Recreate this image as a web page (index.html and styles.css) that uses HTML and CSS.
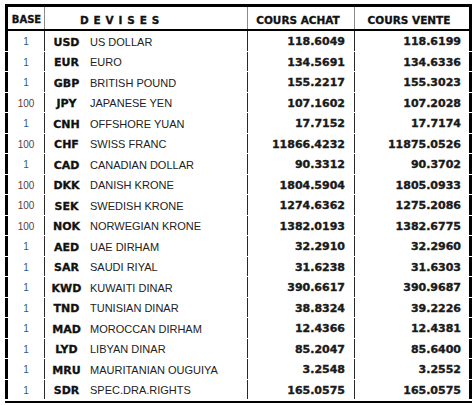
FILE: index.html
```html
<!DOCTYPE html>
<html>
<head>
<meta charset="utf-8">
<link rel="stylesheet" href="styles.css">
</head>
<body>
<div class="table">
  <div class="head">
    <div class="c-base">BASE</div>
    <div class="c-dev">D E V I S E S</div>
    <div class="c-num">COURS ACHAT</div>
    <div class="c-num">COURS VENTE</div>
  </div>
  <div class="rows">
    <div class="row"><div class="base one">1</div><div class="dev"><span class="code">USD</span><span class="name">US DOLLAR</span></div><div class="num">118.6049</div><div class="num v">118.6199</div></div>
    <div class="row"><div class="base one">1</div><div class="dev"><span class="code">EUR</span><span class="name">EURO</span></div><div class="num">134.5691</div><div class="num v">134.6336</div></div>
    <div class="row"><div class="base one">1</div><div class="dev"><span class="code">GBP</span><span class="name">BRITISH POUND</span></div><div class="num">155.2217</div><div class="num v">155.3023</div></div>
    <div class="row"><div class="base hund">100</div><div class="dev"><span class="code">JPY</span><span class="name">JAPANESE YEN</span></div><div class="num">107.1602</div><div class="num v">107.2028</div></div>
    <div class="row"><div class="base one">1</div><div class="dev"><span class="code">CNH</span><span class="name">OFFSHORE YUAN</span></div><div class="num">17.7152</div><div class="num v">17.7174</div></div>
    <div class="row"><div class="base hund">100</div><div class="dev"><span class="code">CHF</span><span class="name">SWISS FRANC</span></div><div class="num">11866.4232</div><div class="num v">11875.0526</div></div>
    <div class="row"><div class="base one">1</div><div class="dev"><span class="code">CAD</span><span class="name">CANADIAN DOLLAR</span></div><div class="num">90.3312</div><div class="num v">90.3702</div></div>
    <div class="row"><div class="base hund">100</div><div class="dev"><span class="code">DKK</span><span class="name">DANISH KRONE</span></div><div class="num">1804.5904</div><div class="num v">1805.0933</div></div>
    <div class="row"><div class="base hund">100</div><div class="dev"><span class="code">SEK</span><span class="name">SWEDISH KRONE</span></div><div class="num">1274.6362</div><div class="num v">1275.2086</div></div>
    <div class="row"><div class="base hund">100</div><div class="dev"><span class="code">NOK</span><span class="name">NORWEGIAN KRONE</span></div><div class="num">1382.0193</div><div class="num v">1382.6775</div></div>
    <div class="row"><div class="base one">1</div><div class="dev"><span class="code">AED</span><span class="name">UAE DIRHAM</span></div><div class="num">32.2910</div><div class="num v">32.2960</div></div>
    <div class="row"><div class="base one">1</div><div class="dev"><span class="code">SAR</span><span class="name">SAUDI RIYAL</span></div><div class="num">31.6238</div><div class="num v">31.6303</div></div>
    <div class="row"><div class="base one">1</div><div class="dev"><span class="code">KWD</span><span class="name">KUWAITI DINAR</span></div><div class="num">390.6617</div><div class="num v">390.9687</div></div>
    <div class="row"><div class="base one">1</div><div class="dev"><span class="code">TND</span><span class="name">TUNISIAN DINAR</span></div><div class="num">38.8324</div><div class="num v">39.2226</div></div>
    <div class="row"><div class="base one">1</div><div class="dev"><span class="code">MAD</span><span class="name">MOROCCAN DIRHAM</span></div><div class="num">12.4366</div><div class="num v">12.4381</div></div>
    <div class="row"><div class="base one">1</div><div class="dev"><span class="code">LYD</span><span class="name">LIBYAN DINAR</span></div><div class="num">85.2047</div><div class="num v">85.6400</div></div>
    <div class="row"><div class="base one">1</div><div class="dev"><span class="code">MRU</span><span class="name">MAURITANIAN OUGUIYA</span></div><div class="num">3.2548</div><div class="num v">3.2552</div></div>
    <div class="row"><div class="base one">1</div><div class="dev"><span class="code">SDR</span><span class="name">SPEC.DRA.RIGHTS</span></div><div class="num">165.0575</div><div class="num v">165.0575</div></div>
  </div>
</div>
</body>
</html>
```

FILE: styles.css
```css
* { box-sizing: border-box; }
html, body { margin: 0; padding: 0; background: #fff; }
body { font-family: "Liberation Sans", Arial, sans-serif; color: #1a1a1a; }

.table {
  margin: 4px 0 0 5px;
  width: 467px;
  border-top: 3px solid #000;
  border-bottom: 2px solid #000;
}

.head {
  display: grid;
  grid-template-columns: 36px 203px 107px 115px;
  height: 24px;
  border-left: 3px solid #000;
  border-right: 3px solid #000;
  border-bottom: 2px solid #000;
  font-family: "DejaVu Sans", sans-serif;
  font-weight: bold;
  font-size: 10.5px;
  color: #111;
  -webkit-text-stroke: 0.3px #111;
}
.head > div {
  display: flex;
  align-items: center;
  padding-top: 3px;
  border-left: 1px solid #8a8a8a;
  white-space: nowrap;
}
.head > .c-base {
  border-left: none;
  justify-content: center;
  font-size: 10px;
  padding-left: 1px;
}
.head > .c-dev { padding-left: 35px; letter-spacing: 0.6px; }
.head > .c-num { justify-content: center; padding-right: 6px; }

.rows {
  display: flex;
  flex-direction: column;
  gap: 1px;
  padding-bottom: 2px;
}
.row {
  display: grid;
  grid-template-columns: 36px 203px 107px 115px;
  height: 19.5px;
  border-left: 3px solid #000;
  border-right: 3px solid #000;
}
.row > div {
  display: flex;
  align-items: center;
  padding-top: 2px;
  white-space: nowrap;
}
.row > div + div { border-left: 1px solid #2a2a2a; }

.base { justify-content: center; font-size: 10px; }
.one { color: #34587e; }
.hund { color: #5a3c3c; }

.code {
  width: 43px;
  text-align: center;
  font-family: "DejaVu Sans", sans-serif;
  font-weight: bold;
  font-size: 11px;
  color: #111;
  padding-top: 1px;
  -webkit-text-stroke: 0.3px #111;
}
.name {
  padding-left: 2px;
  font-size: 11px;
  color: #222;
}

.num {
  justify-content: flex-end;
  padding-right: 9px;
  font-family: "DejaVu Sans", sans-serif;
  font-weight: bold;
  font-size: 11px;
  color: #1a1a1a;
  -webkit-text-stroke: 0.35px #1a1a1a;
}
.num.v { padding-right: 8px; }
```
